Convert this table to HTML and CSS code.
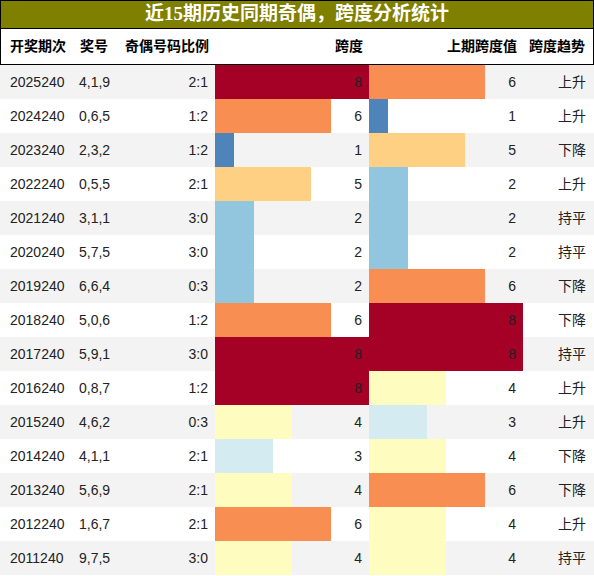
FILE: index.html
```html
<!DOCTYPE html>
<html lang="zh-CN">
<head>
    <meta charset="UTF-8">
    <meta name="viewport" content="width=device-width, initial-scale=1.0">
    <title>跨度分析统计</title>
    <link rel="stylesheet" href="styles.css">
</head>
<body>
    <div class="board">
        <h1 class="title">近15期历史同期奇偶，跨度分析统计</h1>

        <div class="row head">
            <div class="cell left first">开奖期次</div>
            <div class="cell left second">奖号</div>
            <div class="cell right">奇偶号码比例</div>
            <div class="cell right">跨度</div>
            <div class="cell right">上期跨度值</div>
            <div class="cell right last">跨度趋势</div>
        </div>

        <div id="rows"></div>
    </div>

    <script>
        const data = [
            ['2025240', '4,1,9', '2:1', 8, 6, '上升'],
            ['2024240', '0,6,5', '1:2', 6, 1, '上升'],
            ['2023240', '2,3,2', '1:2', 1, 5, '下降'],
            ['2022240', '0,5,5', '2:1', 5, 2, '上升'],
            ['2021240', '3,1,1', '3:0', 2, 2, '持平'],
            ['2020240', '5,7,5', '3:0', 2, 2, '持平'],
            ['2019240', '6,6,4', '0:3', 2, 6, '下降'],
            ['2018240', '5,0,6', '1:2', 6, 8, '下降'],
            ['2017240', '5,9,1', '3:0', 8, 8, '持平'],
            ['2016240', '0,8,7', '1:2', 8, 4, '上升'],
            ['2015240', '4,6,2', '0:3', 4, 3, '上升'],
            ['2014240', '4,1,1', '2:1', 3, 4, '下降'],
            ['2013240', '5,6,9', '2:1', 4, 6, '下降'],
            ['2012240', '1,6,7', '2:1', 6, 4, '上升'],
            ['2011240', '9,7,5', '3:0', 4, 4, '持平']
        ];

        function barCell(value) {
            const width = value / 8 * 100;
            return '<div class="cell right bar-cell">' +
                '<span class="bar v' + value + '" style="width: ' + width + '%"></span>' +
                '<span class="num">' + value + '</span></div>';
        }

        let html = '';
        data.forEach(function(r, i) {
            html += '<div class="row data' + (i % 2 === 0 ? ' odd' : '') + '">' +
                '<div class="cell left first">' + r[0] + '</div>' +
                '<div class="cell left second">' + r[1] + '</div>' +
                '<div class="cell right">' + r[2] + '</div>' +
                barCell(r[3]) +
                barCell(r[4]) +
                '<div class="cell right last">' + r[5] + '</div>' +
                '</div>';
        });
        document.getElementById('rows').innerHTML = html;
    </script>
</body>
</html>
```

FILE: styles.css
```css
body {
    margin: 0;
    background-color: #ffffff;
    font-family: "Liberation Sans", Arial, "Noto Sans CJK SC", sans-serif;
    font-size: 14px;
    color: #222222;
}

.board {
    width: 594px;
}

.title {
    margin: 0;
    height: 29px;
    box-sizing: border-box;
    border: 1px solid #000000;
    background-color: #808000;
    color: #ffffff;
    font-family: "Liberation Serif", "Noto Sans CJK SC", serif;
    font-size: 19px;
    font-weight: bold;
    line-height: 26px;
    text-align: center;
}

.row {
    display: grid;
    grid-template-columns: 72px 45px 98px 154px 154px 1fr;
}

.head {
    height: 36px;
    box-sizing: border-box;
    border-left: 1px solid #000000;
    border-right: 1px solid #000000;
    border-bottom: 1px solid #000000;
    font-weight: bold;
    color: #000000;
    line-height: 35px;
}

.head .first {
    padding-left: 9px;
}

.data {
    height: 34px;
    line-height: 34px;
}

.data.odd {
    background-color: #f3f3f3;
}

.cell {
    white-space: nowrap;
}

.left {
    text-align: left;
}

.right {
    text-align: right;
    padding-right: 7px;
}

.first {
    padding-left: 10px;
}

.second {
    padding-left: 7px;
}

.last {
    padding-right: 8px;
}

.bar-cell {
    position: relative;
}

.bar {
    position: absolute;
    left: 0;
    top: 0;
    bottom: 0;
}

.num {
    position: relative;
}

.v8 { background-color: #a50026; }
.v6 { background-color: #f98e52; }
.v5 { background-color: #fdd084; }
.v4 { background-color: #fefcbf; }
.v3 { background-color: #d5ebf2; }
.v2 { background-color: #92c5de; }
.v1 { background-color: #4f84bb; }
```
